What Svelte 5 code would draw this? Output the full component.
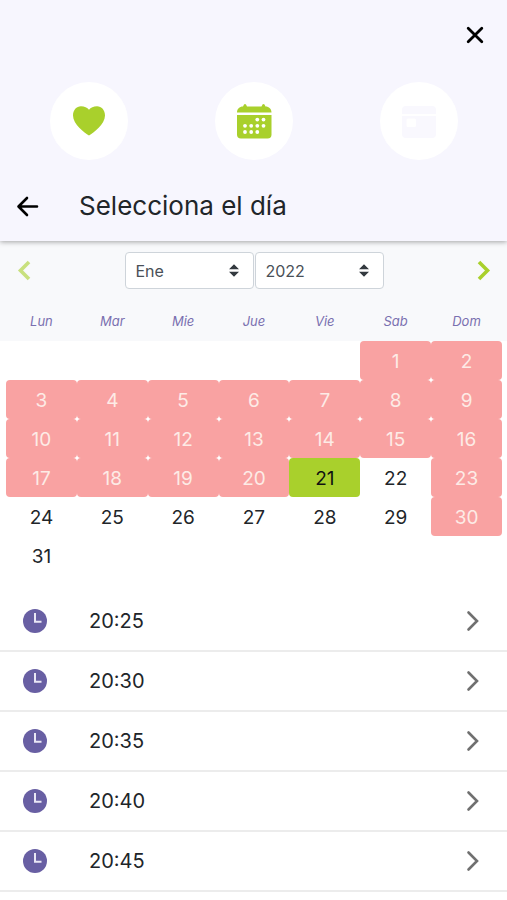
<script lang="ts">
	const months = ['Ene', 'Feb', 'Mar', 'Abr', 'May', 'Jun', 'Jul', 'Ago', 'Sep', 'Oct', 'Nov', 'Dic'];
	const years = [2022, 2023];
	const weekdays = ['Lun', 'Mar', 'Mie', 'Jue', 'Vie', 'Sab', 'Dom'];
	const times = ['20:25', '20:30', '20:35', '20:40', '20:45'];

	let month = $state('Ene');
	let year = $state(2022);
	let selected = $state(21);

	// January 2022 starts on a Saturday
	const offset = 5;
	const weeks = Array.from({ length: 6 }, (_, w) =>
		Array.from({ length: 7 }, (_, d) => {
			const day = w * 7 + d - offset + 1;
			return day > 0 && day <= 31 ? day : null;
		})
	);

	const isClosed = (day: number) => day < 21 || day === 23 || day === 30;
</script>

<div class="booking">
	<header class="header">
		<div class="header__top">
			<button class="icon-button" aria-label="Cerrar">
				<svg width="24" height="24" viewBox="0 0 24 24" fill="none" stroke="#000" stroke-width="2.8" stroke-linecap="round"><path d="M5.2 5.2l13.6 13.6M18.8 5.2L5.2 18.8"/></svg>
			</button>
		</div>

		<div class="steps">
			<div class="step">
				<svg width="38" height="38" viewBox="0 0 38 38" fill="#a9d02c"><path d="M19 33.500C14.5 30.500 3 22.500 3 13.500C3 8 6.500 4.200 11 4.200C14.500 4.200 17.300 5.500 19 7.800C20.700 5.500 23.500 4.200 27 4.200C31.500 4.200 35 8 35 13.500C35 22.500 23.500 30.500 19 33.500z"/></svg>
			</div>
			<div class="step">
				<svg width="38" height="38" viewBox="0 0 38 38">
					<path fill="#a9d02c" d="M2 10.500C2 7 4.500 4.500 8 4.500L9 2.500q1-1 2 0L12 4.500H26.500L27.500 2.500q1-1 2 0L30.500 4.500C34 4.500 36.500 7 36.500 10.500z"/>
					<path fill="#a9d02c" d="M2 13H36.500V32.500a4 4 0 0 1-4 4H6a4 4 0 0 1-4-4z"/>
					<g fill="#fff">
						<circle cx="22.300" cy="17.600" r="1.900"/><circle cx="28.500" cy="17.600" r="1.900"/>
						<circle cx="10" cy="23.800" r="1.900"/><circle cx="16.200" cy="23.800" r="1.900"/><circle cx="22.300" cy="23.800" r="1.900"/><circle cx="28.500" cy="23.800" r="1.900"/>
						<circle cx="10" cy="30" r="1.900"/><circle cx="16.200" cy="30" r="1.900"/><circle cx="22.300" cy="30" r="1.900"/>
					</g>
				</svg>
			</div>
			<div class="step">
				<svg width="38" height="38" viewBox="0 0 38 38" fill="#f9f8fe">
					<path d="M2 8a4 4 0 0 1 4-4H32a4 4 0 0 1 4 4V12H2z"/>
					<path fill-rule="evenodd" d="M2 14H36V32a4 4 0 0 1-4 4H6a4 4 0 0 1-4-4zM8 16.500a1.500 1.500 0 0 0-1.500 1.500V23.500A1.500 1.500 0 0 0 8 25H14.500A1.500 1.500 0 0 0 16 23.500V18A1.500 1.500 0 0 0 14.500 16.500z"/>
				</svg>
			</div>
		</div>

		<div class="header__title">
			<button class="icon-button" aria-label="Volver">
				<svg width="24" height="24" viewBox="0 0 24 24" fill="none" stroke="#000" stroke-width="2.600" stroke-linecap="round" stroke-linejoin="round"><path d="M21 12.500H3M11 4L2.500 12.500L11 21"/></svg>
			</button>
			<h1>Selecciona el día</h1>
		</div>
	</header>

	<section class="calendar">
		<div class="calendar__nav">
			<button class="icon-button" aria-label="Mes anterior" disabled>
				<svg width="14" height="22" viewBox="0 0 14 22" fill="none" stroke="#a9d02c" stroke-width="3.600"><path d="M12 2L3.500 10.500L12 19"/></svg>
			</button>
			<div class="calendar__selects">
				<select aria-label="Mes" bind:value={month}>
					{#each months as name}
						<option value={name}>{name}</option>
					{/each}
				</select>
				<select aria-label="Año" bind:value={year}>
					{#each years as value}
						<option {value}>{value}</option>
					{/each}
				</select>
			</div>
			<button class="icon-button" aria-label="Mes siguiente">
				<svg width="14" height="22" viewBox="0 0 14 22" fill="none" stroke="#a9d02c" stroke-width="3.600"><path d="M2 2L10.500 10.500L2 19"/></svg>
			</button>
		</div>

		<table class="month">
			<thead>
				<tr>
					{#each weekdays as weekday}
						<th scope="col">{weekday}</th>
					{/each}
				</tr>
			</thead>
			<tbody>
				{#each weeks as week}
					<tr>
						{#each week as day}
							<td>
								{#if day}
									<button
										class="day"
										class:selected={selected === day}
										disabled={isClosed(day)}
										onclick={() => (selected = day)}
									>{day}</button>
								{/if}
							</td>
						{/each}
					</tr>
				{/each}
			</tbody>
		</table>
	</section>

	<ul class="times">
		{#each times as time}
			<li>
				<button class="time">
					<svg width="24" height="24" viewBox="0 0 24 24"><circle cx="12" cy="12" r="12" fill="#685fa3"/><path d="M12 4V12.800H18.500" fill="none" stroke="#e9e7f5" stroke-width="2"/></svg>
					<span>{time}</span>
					<svg width="14" height="22" viewBox="0 0 14 22" fill="none" stroke="#707070" stroke-width="2.600" stroke-linecap="round"><path d="M2.500 2.500L11 11L2.500 19.500"/></svg>
				</button>
			</li>
		{/each}
	</ul>
</div>

<style>
	:global(body) {
		background: #fff;
	}

	.booking {
		font-family: Inter, 'Liberation Sans', sans-serif;
		color: #212529;
	}

	button {
		font: inherit;
		color: inherit;
		background: none;
		border: 0;
		padding: 0;
		cursor: pointer;
	}

	.icon-button {
		display: flex;
	}

	.icon-button:disabled {
		opacity: 0.6;
	}

	.header {
		position: relative;
		padding: 23px 0 20px;
		background: #f7f6fe;
		box-shadow: 0 1px 5px rgba(0, 0, 0, 0.35);
	}

	.header__top {
		display: flex;
		justify-content: flex-end;
		padding: 0 20px;
	}

	.steps {
		display: flex;
		justify-content: space-between;
		margin-top: 35px;
		padding: 0 49px 0 50px;
	}

	.step {
		display: flex;
		align-items: center;
		justify-content: center;
		width: 78px;
		height: 78px;
		border-radius: 50%;
		background: #fff;
	}

	.header__title {
		display: flex;
		align-items: center;
		gap: 39px;
		margin-top: 30px;
		padding: 0 16px;
	}

	h1 {
		margin: 0;
		font-size: 26px;
		font-weight: 400;
		line-height: 31px;
	}

	.calendar {
		background: linear-gradient(#f8f9fb 100px, #fff 100px);
	}

	.calendar__nav {
		display: flex;
		align-items: center;
		justify-content: space-between;
		padding: 11px 16px 14px 17px;
	}

	.calendar__selects {
		display: flex;
		gap: 1px;
	}

	select {
		appearance: none;
		width: 129px;
		height: 37px;
		padding: 0 10px;
		border: 1px solid #ced4da;
		border-radius: 4px;
		background: #fff url("data:image/svg+xml,%3Csvg xmlns='http://www.w3.org/2000/svg' viewBox='0 0 4 5'%3E%3Cpath fill='%23343a40' d='M2 0L0 2h4zm0 5L0 3h4z'/%3E%3C/svg%3E") no-repeat right 14px center / 10px 13px;
		font-family: inherit;
		font-size: 16px;
		color: #495057;
	}

	.month {
		width: calc(100% - 11px);
		margin: 0 5px 0 6px;
		table-layout: fixed;
		border-collapse: collapse;
	}

	th {
		height: 38px;
		padding: 0 0 2px;
		box-sizing: border-box;
		font-size: 13px;
		font-style: italic;
		font-weight: 400;
		color: #7a70b0;
	}

	td {
		height: 39px;
		padding: 0;
	}

	.day {
		display: block;
		width: 100%;
		height: 39px;
		padding-top: 2px;
		border-radius: 4px;
		font-size: 19px;
	}

	.day:disabled {
		background: #f9a2a2;
		color: #fdebe6;
		cursor: default;
	}

	.day.selected {
		background: #a9d02c;
		color: #111;
	}

	.times {
		list-style: none;
		margin: 17px 0 0;
		padding: 0;
	}

	.time {
		display: flex;
		align-items: center;
		width: 100%;
		height: 60px;
		padding: 0 27px 0 23px;
		border-bottom: 2px solid #ececec;
		font-size: 20px;
		text-align: left;
	}

	.time span {
		flex: 1;
		padding-left: 42px;
	}
</style>
